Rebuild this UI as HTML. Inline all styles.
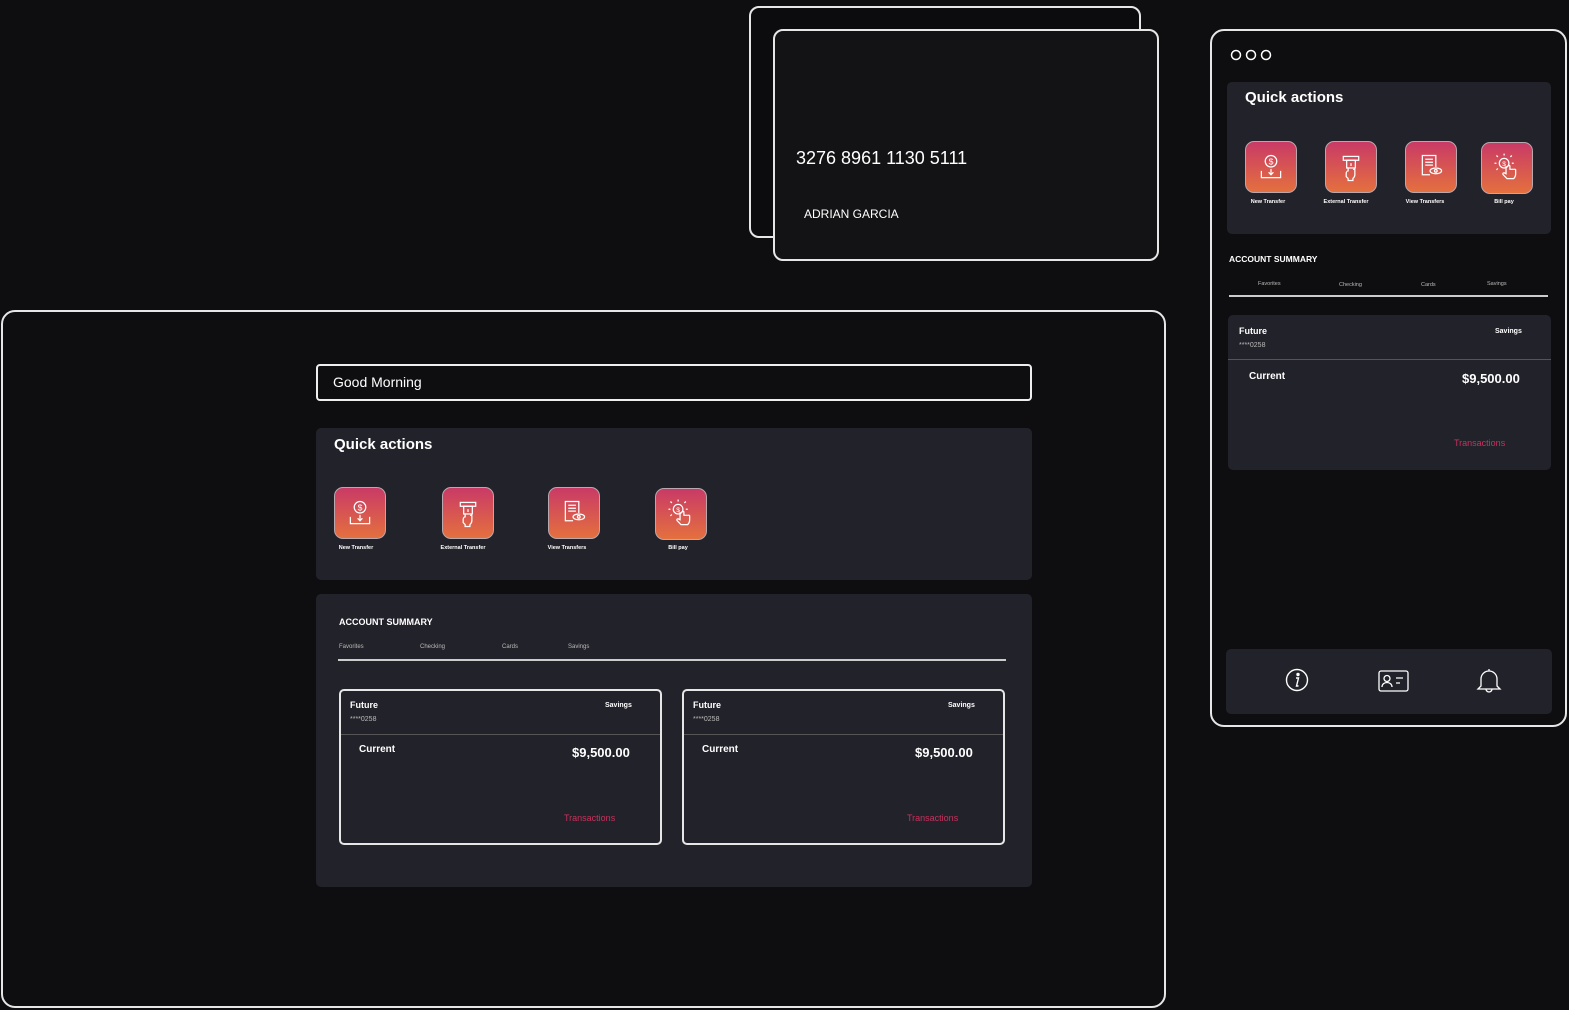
<!DOCTYPE html>
<html><head><meta charset="utf-8">
<style>
*{margin:0;padding:0;box-sizing:border-box}
body{width:1569px;height:1010px;background:#0e0e10;position:relative;overflow:hidden;font-family:"Liberation Sans",sans-serif;color:#fff}
.a{position:absolute}
.frame{border:2px solid #e6e6e6;border-radius:14px}
.panel{background:#22222a;border-radius:5px}
.b{font-weight:bold}
.ic{position:absolute;width:52px;height:52px;border-radius:9px;border:1.5px solid #b9a8ad;background:linear-gradient(#c93a66,#e4703e)}
.ic svg{width:100%;height:100%}
.lbl{position:absolute;font-size:5.5px;font-weight:bold;white-space:nowrap;text-align:center;width:80px}
.tab{position:absolute;font-size:6px;color:#bbb}
.acc{position:absolute;border:2px solid #e6e6e6;border-radius:5px;background:#22222a}
.pink{color:#c9325c}
</style></head><body>
<svg width="0" height="0" style="position:absolute">
<defs>
<g id="i1" fill="none" stroke="#fff" stroke-width="1.3"><circle cx="26" cy="20" r="6"/><text x="26" y="23.5" font-size="9" text-anchor="middle" fill="#fff" stroke="none" font-family="Liberation Sans">$</text><path d="M26 28v6M23.5 31.5l2.5 2.5 2.5-2.5M16 30v7h20v-7"/></g>
<g id="i2" fill="none" stroke="#fff" stroke-width="1.3"><rect x="18" y="15" width="16" height="4"/><rect x="21.5" y="19" width="9" height="8"/><path d="M23 27v3c-1 0-2 1-2 3v3l2 2v2h5v-2c1-1 2-2 2-4v-5c0-1-1-1-1.5 0M26 22v3"/></g>
<g id="i3" fill="none" stroke="#fff" stroke-width="1.3"><path d="M31 26V14H17v20h8"/><path d="M20 18h8M20 21h8M20 24h8"/><ellipse cx="31" cy="30" rx="6" ry="3"/><circle cx="31" cy="30" r="1.4"/></g>
<g id="i4" fill="none" stroke="#fff" stroke-width="1.3"><circle cx="23" cy="21" r="5"/><path d="M23 11v2M15 13l1.5 1.5M31 13l-1.5 1.5M13 21h2M31 21h2M15 28l1.5-1.5"/><path d="M25 24v8l-2-1c-1 0-2 1-1 2l4 4h7c1-1 2-3 2-5v-4c0-1-2-1-2 0 0-1-2-1-2 0 0-1-2-1-2 0v-4c0-1-2-1-2 0"/><text x="23" y="24" font-size="7" text-anchor="middle" fill="#fff" stroke="none">$</text></g>
</defs></svg>

<!-- credit cards -->
<div class="a frame" style="left:749px;top:6px;width:392px;height:232px;border-radius:10px;background:#0c0c0e"></div>
<div class="a frame" style="left:773px;top:29px;width:386px;height:232px;border-radius:10px;background:#131315"></div>
<div class="a" style="left:796px;top:148px;font-size:18px">3276 8961 1130 5111</div>
<div class="a" style="left:804px;top:207px;font-size:12px">ADRIAN GARCIA</div>

<!-- main frame -->
<div class="a frame" style="left:1px;top:310px;width:1165px;height:698px"></div>
<div class="a" style="left:316px;top:364px;width:716px;height:37px;border:2px solid #eee;border-radius:4px;font-size:14px;padding:8px 15px">Good Morning</div>
<div class="a panel" style="left:316px;top:428px;width:716px;height:152px"></div>
<div class="a b" style="left:334px;top:436px;font-size:15px">Quick actions</div>
<div class="ic" style="left:334px;top:487px"><svg viewBox="0 0 52 52"><use href="#i1"/></svg></div>
<div class="ic" style="left:442px;top:487px"><svg viewBox="0 0 52 52"><use href="#i2"/></svg></div>
<div class="ic" style="left:548px;top:487px"><svg viewBox="0 0 52 52"><use href="#i3"/></svg></div>
<div class="ic" style="left:655px;top:488px"><svg viewBox="0 0 52 52"><use href="#i4"/></svg></div>
<div class="lbl" style="left:316px;top:545px;text-align:center;width:80px">New Transfer</div>
<div class="lbl" style="left:423px;top:545px">External Transfer</div>
<div class="lbl" style="left:527px;top:545px">View Transfers</div>
<div class="lbl" style="left:638px;top:545px">Bill pay</div>

<div class="a panel" style="left:316px;top:594px;width:716px;height:293px"></div>
<div class="a b" style="left:339px;top:617px;font-size:9px">ACCOUNT SUMMARY</div>
<div class="tab" style="left:339px;top:644px">Favorites</div>
<div class="tab" style="left:420px;top:644px">Checking</div>
<div class="tab" style="left:502px;top:644px">Cards</div>
<div class="tab" style="left:568px;top:644px">Savings</div>
<div class="a" style="left:338px;top:659px;width:668px;height:2px;background:#ccc"></div>

<div class="acc" style="left:339px;top:689px;width:323px;height:156px"></div>
<div class="acc" style="left:682px;top:689px;width:323px;height:156px"></div>

<div class="a b" style="left:350px;top:700px;font-size:9px">Future</div>
<div class="a" style="left:350px;top:716px;font-size:7px;color:#bbb">****0258</div>
<div class="a b" style="left:605px;top:702px;font-size:7px">Savings</div>
<div class="a" style="left:341px;top:734px;width:319px;height:1px;background:#555"></div>
<div class="a b" style="left:359px;top:744px;font-size:10px">Current</div>
<div class="a b" style="left:572px;top:745px;font-size:13px">$9,500.00</div>
<div class="a pink" style="left:564px;top:813px;font-size:9px">Transactions</div>

<div class="a b" style="left:693px;top:700px;font-size:9px">Future</div>
<div class="a" style="left:693px;top:716px;font-size:7px;color:#bbb">****0258</div>
<div class="a b" style="left:948px;top:702px;font-size:7px">Savings</div>
<div class="a" style="left:684px;top:734px;width:319px;height:1px;background:#555"></div>
<div class="a b" style="left:702px;top:744px;font-size:10px">Current</div>
<div class="a b" style="left:915px;top:745px;font-size:13px">$9,500.00</div>
<div class="a pink" style="left:907px;top:813px;font-size:9px">Transactions</div>

<!-- mobile -->
<div class="a frame" style="left:1210px;top:29px;width:357px;height:698px"></div>
<svg class="a" style="left:1228px;top:47px" width="50" height="16"><g fill="none" stroke="#fff" stroke-width="1.5"><circle cx="8" cy="8" r="4.5"/><circle cx="23" cy="8" r="4.5"/><circle cx="38" cy="8" r="4.5"/></g></svg>
<div class="a panel" style="left:1227px;top:82px;width:324px;height:152px"></div>
<div class="a b" style="left:1245px;top:89px;font-size:15px">Quick actions</div>
<div class="ic" style="left:1245px;top:141px"><svg viewBox="0 0 52 52"><use href="#i1"/></svg></div>
<div class="ic" style="left:1325px;top:141px"><svg viewBox="0 0 52 52"><use href="#i2"/></svg></div>
<div class="ic" style="left:1405px;top:141px"><svg viewBox="0 0 52 52"><use href="#i3"/></svg></div>
<div class="ic" style="left:1481px;top:142px"><svg viewBox="0 0 52 52"><use href="#i4"/></svg></div>
<div class="lbl" style="left:1228px;top:199px">New Transfer</div>
<div class="lbl" style="left:1306px;top:199px">External Transfer</div>
<div class="lbl" style="left:1385px;top:199px">View Transfers</div>
<div class="lbl" style="left:1464px;top:199px">Bill pay</div>
<div class="a b" style="left:1229px;top:254px;font-size:8.5px">ACCOUNT SUMMARY</div>
<div class="tab" style="left:1258px;top:281px;font-size:5.5px">Favorites</div>
<div class="tab" style="left:1339px;top:282px;font-size:5.5px">Checking</div>
<div class="tab" style="left:1421px;top:282px;font-size:5.5px">Cards</div>
<div class="tab" style="left:1487px;top:281px;font-size:5.5px">Savings</div>
<div class="a" style="left:1229px;top:295px;width:319px;height:2px;background:#ccc"></div>
<div class="a panel" style="left:1228px;top:315px;width:323px;height:155px"></div>
<div class="a b" style="left:1239px;top:326px;font-size:9px">Future</div>
<div class="a" style="left:1239px;top:342px;font-size:7px;color:#bbb">****0258</div>
<div class="a b" style="left:1495px;top:328px;font-size:7px">Savings</div>
<div class="a" style="left:1228px;top:359px;width:323px;height:1px;background:#555"></div>
<div class="a b" style="left:1249px;top:371px;font-size:10px">Current</div>
<div class="a b" style="left:1462px;top:371px;font-size:13px">$9,500.00</div>
<div class="a pink" style="left:1454px;top:438px;font-size:9px">Transactions</div>

<div class="a panel" style="left:1226px;top:649px;width:326px;height:65px"></div>
<svg class="a" style="left:1284px;top:667px" width="26" height="26" fill="none" stroke="#fff" stroke-width="1.4"><circle cx="13" cy="13" r="10.5"/><circle cx="14" cy="7.5" r="1" fill="#fff"/><path d="M12 11h2.5l-2 8h2"/></svg>
<svg class="a" style="left:1378px;top:670px" width="31" height="22" fill="none" stroke="#fff" stroke-width="1.3"><rect x="1" y="1" width="29" height="20" rx="2"/><circle cx="9" cy="8.5" r="3"/><path d="M4 17c0-3 2.5-4.5 5-4.5s5 1.5 5 4.5M18 8h7M18 13h4"/></svg>
<svg class="a" style="left:1476px;top:667px" width="26" height="28" fill="none" stroke="#fff" stroke-width="1.3"><path d="M13 2v2M5 19v-7a8 8 0 0 1 16 0v7l3 3H2z M10 22a3 3 0 0 0 6 0"/></svg>
</body></html>
